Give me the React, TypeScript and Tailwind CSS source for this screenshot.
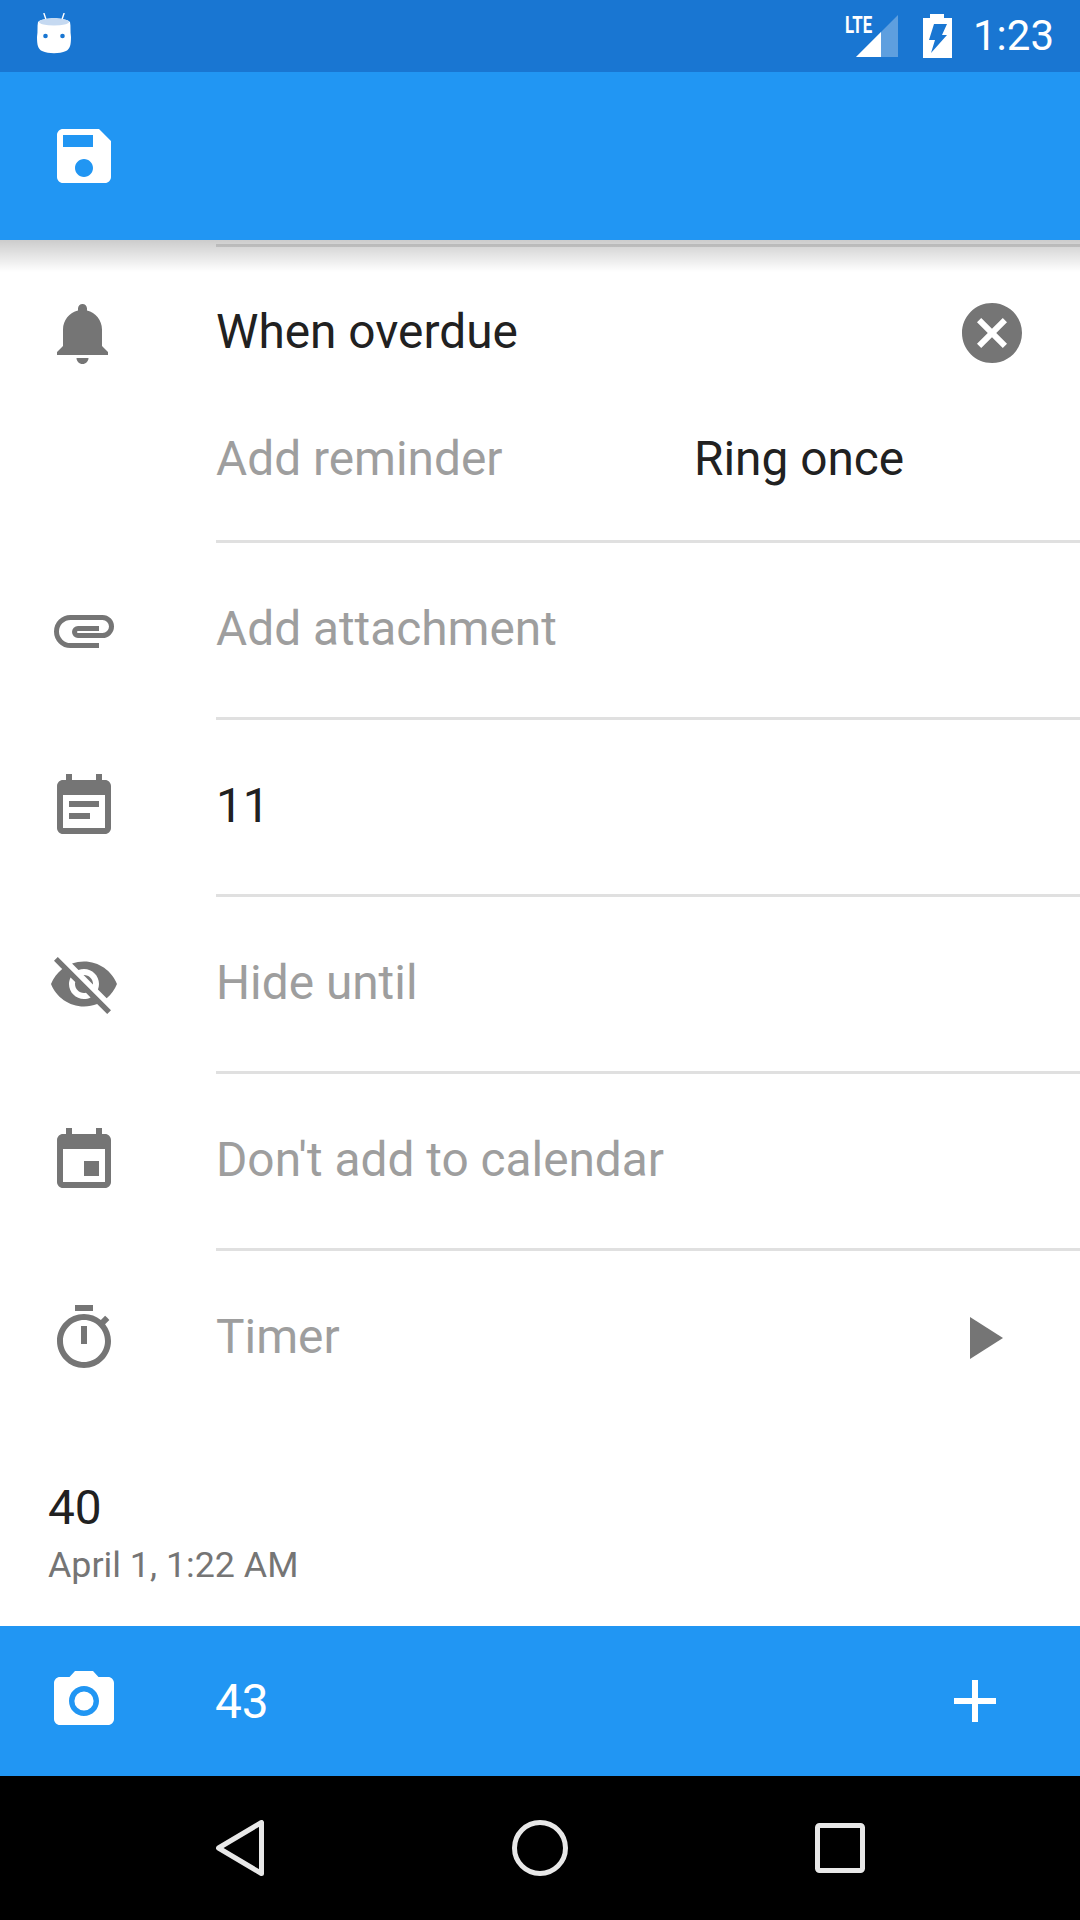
import type { ReactNode } from "react";

const paths = {
  save: "M17 3H5c-1.11 0-2 .9-2 2v14c0 1.1.89 2 2 2h14c1.1 0 2-.9 2-2V7l-4-4zm-5 16c-1.66 0-3-1.34-3-3s1.34-3 3-3 3 1.34 3 3-1.34 3-3 3zm3-10H5V5h10v4z",
  bell: "M11.5 22c1.1 0 2-.9 2-2h-4c0 1.1.9 2 2 2zm6.5-6v-5.5c0-3.07-2.13-5.64-5-6.32V3.5c0-.83-.67-1.5-1.5-1.5S10 2.67 10 3.5v.68c-2.87.68-5 3.25-5 6.32V16l-2 2v1h17v-1l-2-2z",
  cancel: "M12 2C6.47 2 2 6.47 2 12s4.47 10 10 10 10-4.47 10-10S17.53 2 12 2zm5 13.59L15.59 17 12 13.41 8.41 17 7 15.59 10.59 12 7 8.41 8.41 7 12 10.59 15.59 7 17 8.41 13.41 12 17 15.59z",
  note: "M17 10H7v2h10v-2zm2-7h-1V1h-2v2H8V1H6v2H5c-1.11 0-1.99.9-1.99 2L3 19c0 1.1.89 2 2 2h14c1.1 0 2-.9 2-2V5c0-1.1-.9-2-2-2zm0 16H5V8h14v11zm-5-5H7v2h7v-2z",
  eyeOff: "M12 7c2.76 0 5 2.24 5 5 0 .65-.13 1.26-.36 1.83l2.92 2.92c1.51-1.26 2.7-2.89 3.43-4.75-1.73-4.39-6-7.5-11-7.5-1.4 0-2.74.25-3.98.7l2.16 2.16C10.74 7.13 11.35 7 12 7zM2 4.27l2.28 2.28.46.46C3.08 8.3 1.78 10.02 1 12c1.73 4.39 6 7.5 11 7.5 1.55 0 3.03-.3 4.38-.84l.42.42L19.73 22 21 20.73 3.27 3 2 4.27zM7.53 9.8l1.55 1.55c-.05.21-.08.43-.08.65 0 1.66 1.34 3 3 3 .22 0 .44-.03.65-.08l1.55 1.55c-.67.33-1.41.53-2.2.53-2.76 0-5-2.24-5-5 0-.79.2-1.53.53-2.2zm4.31-.78l3.15 3.15.02-.16c0-1.66-1.34-3-3-3l-.17.01z",
  event: "M17 12h-5v5h5v-5zM16 1v2H8V1H6v2H5c-1.11 0-1.99.9-1.99 2L3 19c0 1.1.89 2 2 2h14c1.1 0 2-.9 2-2V5c0-1.1-.9-2-2-2h-1V1h-2zm3 18H5V8h14v11z",
  timer: "M15 1H9v2h6V1zm-4 13h2V8h-2v6zm8.03-6.61l1.42-1.42c-.43-.51-.9-.99-1.41-1.41l-1.42 1.42C16.07 4.74 14.12 4 12 4c-4.97 0-9 4.03-9 9s4.02 9 9 9 9-4.03 9-9c0-2.12-.74-4.07-1.97-5.61zM12 20c-3.87 0-7-3.13-7-7s3.13-7 7-7 7 3.13 7 7-3.13 7-7 7z",
  play: "M8 5v14l11-7z",
  add: "M19 13h-6v6h-2v-6H5v-2h6V5h2v6h6v2z",
  camera: "M12 15.2a3.2 3.2 0 1 0 0-6.4 3.2 3.2 0 0 0 0 6.4zM9 2L7.17 4H4c-1.1 0-2 .9-2 2v12c0 1.1.9 2 2 2h16c1.1 0 2-.9 2-2V6c0-1.1-.9-2-2-2h-3.17L15 2H9zm3 15c-2.76 0-5-2.24-5-5s2.24-5 5-5 5 2.24 5 5-2.24 5-5 5z",
};

const Icon = ({ d, className = "fill-[#757575]" }: { d: string; className?: string }) => (
  <svg viewBox="0 0 24 24" className={`w-[72px] h-[72px] shrink-0 ${className}`}>
    <path d={d} />
  </svg>
);

// el clip de la referencia es mas fino que el de material
const AttachIcon = () => (
  <svg viewBox="0 0 72 72" className="w-[72px] h-[72px] shrink-0 fill-none stroke-[#757575]">
    <path d="M51 51.500H22.500A14 14 0 0 1 22.500 23.500H54.500A9 9 0 0 1 54.500 41.500H30A3.500 3.500 0 0 1 30 34.500H51" strokeWidth="5" />
  </svg>
);

const Row = ({ icon, children }: { icon: ReactNode; children: ReactNode }) => (
  <div className="flex h-[177px]">
    <div className="w-[216px] h-[174px] pl-12 flex items-center">{icon}</div>
    <div className="flex-1 flex items-center border-b-[3px] border-[#e0e0e0]">{children}</div>
  </div>
);

const Hint = ({ children }: { children: ReactNode }) => (
  <span className="text-[47.8px] leading-none text-[#9e9e9e]">{children}</span>
);

const Value = ({ children }: { children: ReactNode }) => (
  <span className="text-[47.8px] leading-none text-[#212121]">{children}</span>
);

const StatusBar = () => (
  <div className="h-[72px] bg-[#1976d2] flex items-center pl-[37px] pr-[26px]">
    <svg viewBox="0 0 34 41" className="w-[34px] h-[41px] fill-white -mt-[5px]">
      <path d="M7 .5l2.500 7.500M27 .5l-2.500 7.500" stroke="#fff" strokeWidth="1.400" strokeLinecap="round" />
      <path d="M1 9C6 4 28 4 33 9c1 5 0 9 1 15 0 8-1 12-5 14-7 3-17 3-24 0-4-2-5-6-5-14 1-6 0-10 1-15z" />
      <ellipse cx="17" cy="9" rx="15" ry="3.500" fill="#c5d9f1" />
      <circle cx="8.500" cy="23" r="2.300" fill="#1976d2" />
      <circle cx="25.500" cy="23" r="2.300" fill="#1976d2" />
    </svg>
    <div className="flex-1" />
    <div className="relative w-[42px] h-[42px] mr-[25px]">
      <svg viewBox="0 0 42 42" className="w-[42px] h-[42px]">
        <path d="M42 0v42H0z" fill="#fff" fillOpacity="0.3" />
        <path d="M25 17v25H0z" fill="#fff" />
      </svg>
      <span className="absolute left-[-11px] top-[-1px] text-[24px] leading-[23px] font-bold text-white scale-x-[0.7] origin-left">
        LTE
      </span>
    </div>
    <svg viewBox="0 0 29 44" className="w-[29px] h-[44px] mr-[21px]">
      <path d="M7 0h14v4h8v40H0V4h7z" fill="#fff" />
      <path d="M11 10h13l-5 11h5L8 39l4-13H6z" fill="#1976d2" />
    </svg>
    <span className="text-[42px] leading-none text-white">1:23</span>
  </div>
);

const Toolbar = () => (
  <div className="h-[168px] bg-[#2196f3] flex items-center pl-12">
    <Icon d={paths.save} className="fill-white" />
  </div>
);

const NavBar = () => (
  <div className="h-[144px] bg-black flex items-center justify-between pl-[216px] pr-[215px]">
    <svg viewBox="0 0 48 56" className="w-[48px] h-[56px] fill-none stroke-[#e8e8e8]">
      <path d="M45.500 2.500v51L2.500 28z" strokeWidth="5" strokeLinejoin="round" />
    </svg>
    <svg viewBox="0 0 56 56" className="w-[56px] h-[56px] fill-none stroke-[#e8e8e8]">
      <circle cx="28" cy="28" r="25.500" strokeWidth="5" />
    </svg>
    <svg viewBox="0 0 50 50" className="w-[50px] h-[50px] fill-none stroke-[#e8e8e8]">
      <rect x="2.500" y="2.500" width="45" height="45" rx="2" strokeWidth="5" />
    </svg>
  </div>
);

export default function App() {
  return (
    <div className="w-[1080px] h-[1920px] flex flex-col bg-white overflow-hidden font-['Roboto',sans-serif]">
      <StatusBar />
      <Toolbar />

      <div className="flex-1 flex flex-col relative">
        {/* sombra del toolbar */}
        <div className="absolute top-0 inset-x-0 h-[32px] bg-gradient-to-b from-black/20 to-transparent" />

        <div className="ml-[216px] h-[7px] border-b-[3px] border-[#e0e0e0]" />

        {/* recordatorios */}
        <div className="flex h-[296px]">
          <div className="w-[216px] pl-12 pt-[51px]">
            <Icon d={paths.bell} />
          </div>
          <div className="flex-1 flex flex-col border-b-[3px] border-[#e0e0e0]">
            <div className="h-[172px] flex items-center justify-between pr-[52px]">
              <Value>When overdue</Value>
              <Icon d={paths.cancel} />
            </div>
            <div className="h-[82px] flex items-center">
              <span className="w-[478px]">
                <Hint>Add reminder</Hint>
              </span>
              <Value>Ring once</Value>
            </div>
          </div>
        </div>

        <Row icon={<AttachIcon />}>
          <Hint>Add attachment</Hint>
        </Row>
        <Row icon={<Icon d={paths.note} />}>
          <Value>11</Value>
        </Row>
        <Row icon={<Icon d={paths.eyeOff} />}>
          <Hint>Hide until</Hint>
        </Row>
        <Row icon={<Icon d={paths.event} />}>
          <Hint>Don't add to calendar</Hint>
        </Row>

        <div className="flex h-[174px]">
          <div className="w-[216px] pl-12 flex items-center">
            <Icon d={paths.timer} />
          </div>
          <div className="flex-1 flex items-center justify-between pr-[62px]">
            <Hint>Timer</Hint>
            <Icon d={paths.play} />
          </div>
        </div>

        <div className="flex-1 flex flex-col justify-end pl-12 pb-[39px]">
          <span className="text-[47.8px] leading-[56px] text-[#212121] mb-[7px]">40</span>
          <span className="text-[35.8px] leading-[44px] text-[#757575]">April 1, 1:22 AM</span>
        </div>
      </div>

      <div className="h-[150px] bg-[#2196f3] flex items-center pl-12 pr-[69px]">
        <div className="w-[168px]">
          <Icon d={paths.camera} className="fill-white" />
        </div>
        <span className="flex-1 text-[47.8px] leading-none text-white pt-[4px] -ml-[1px]">43</span>
        <Icon d={paths.add} className="fill-white" />
      </div>

      <NavBar />
    </div>
  );
}
